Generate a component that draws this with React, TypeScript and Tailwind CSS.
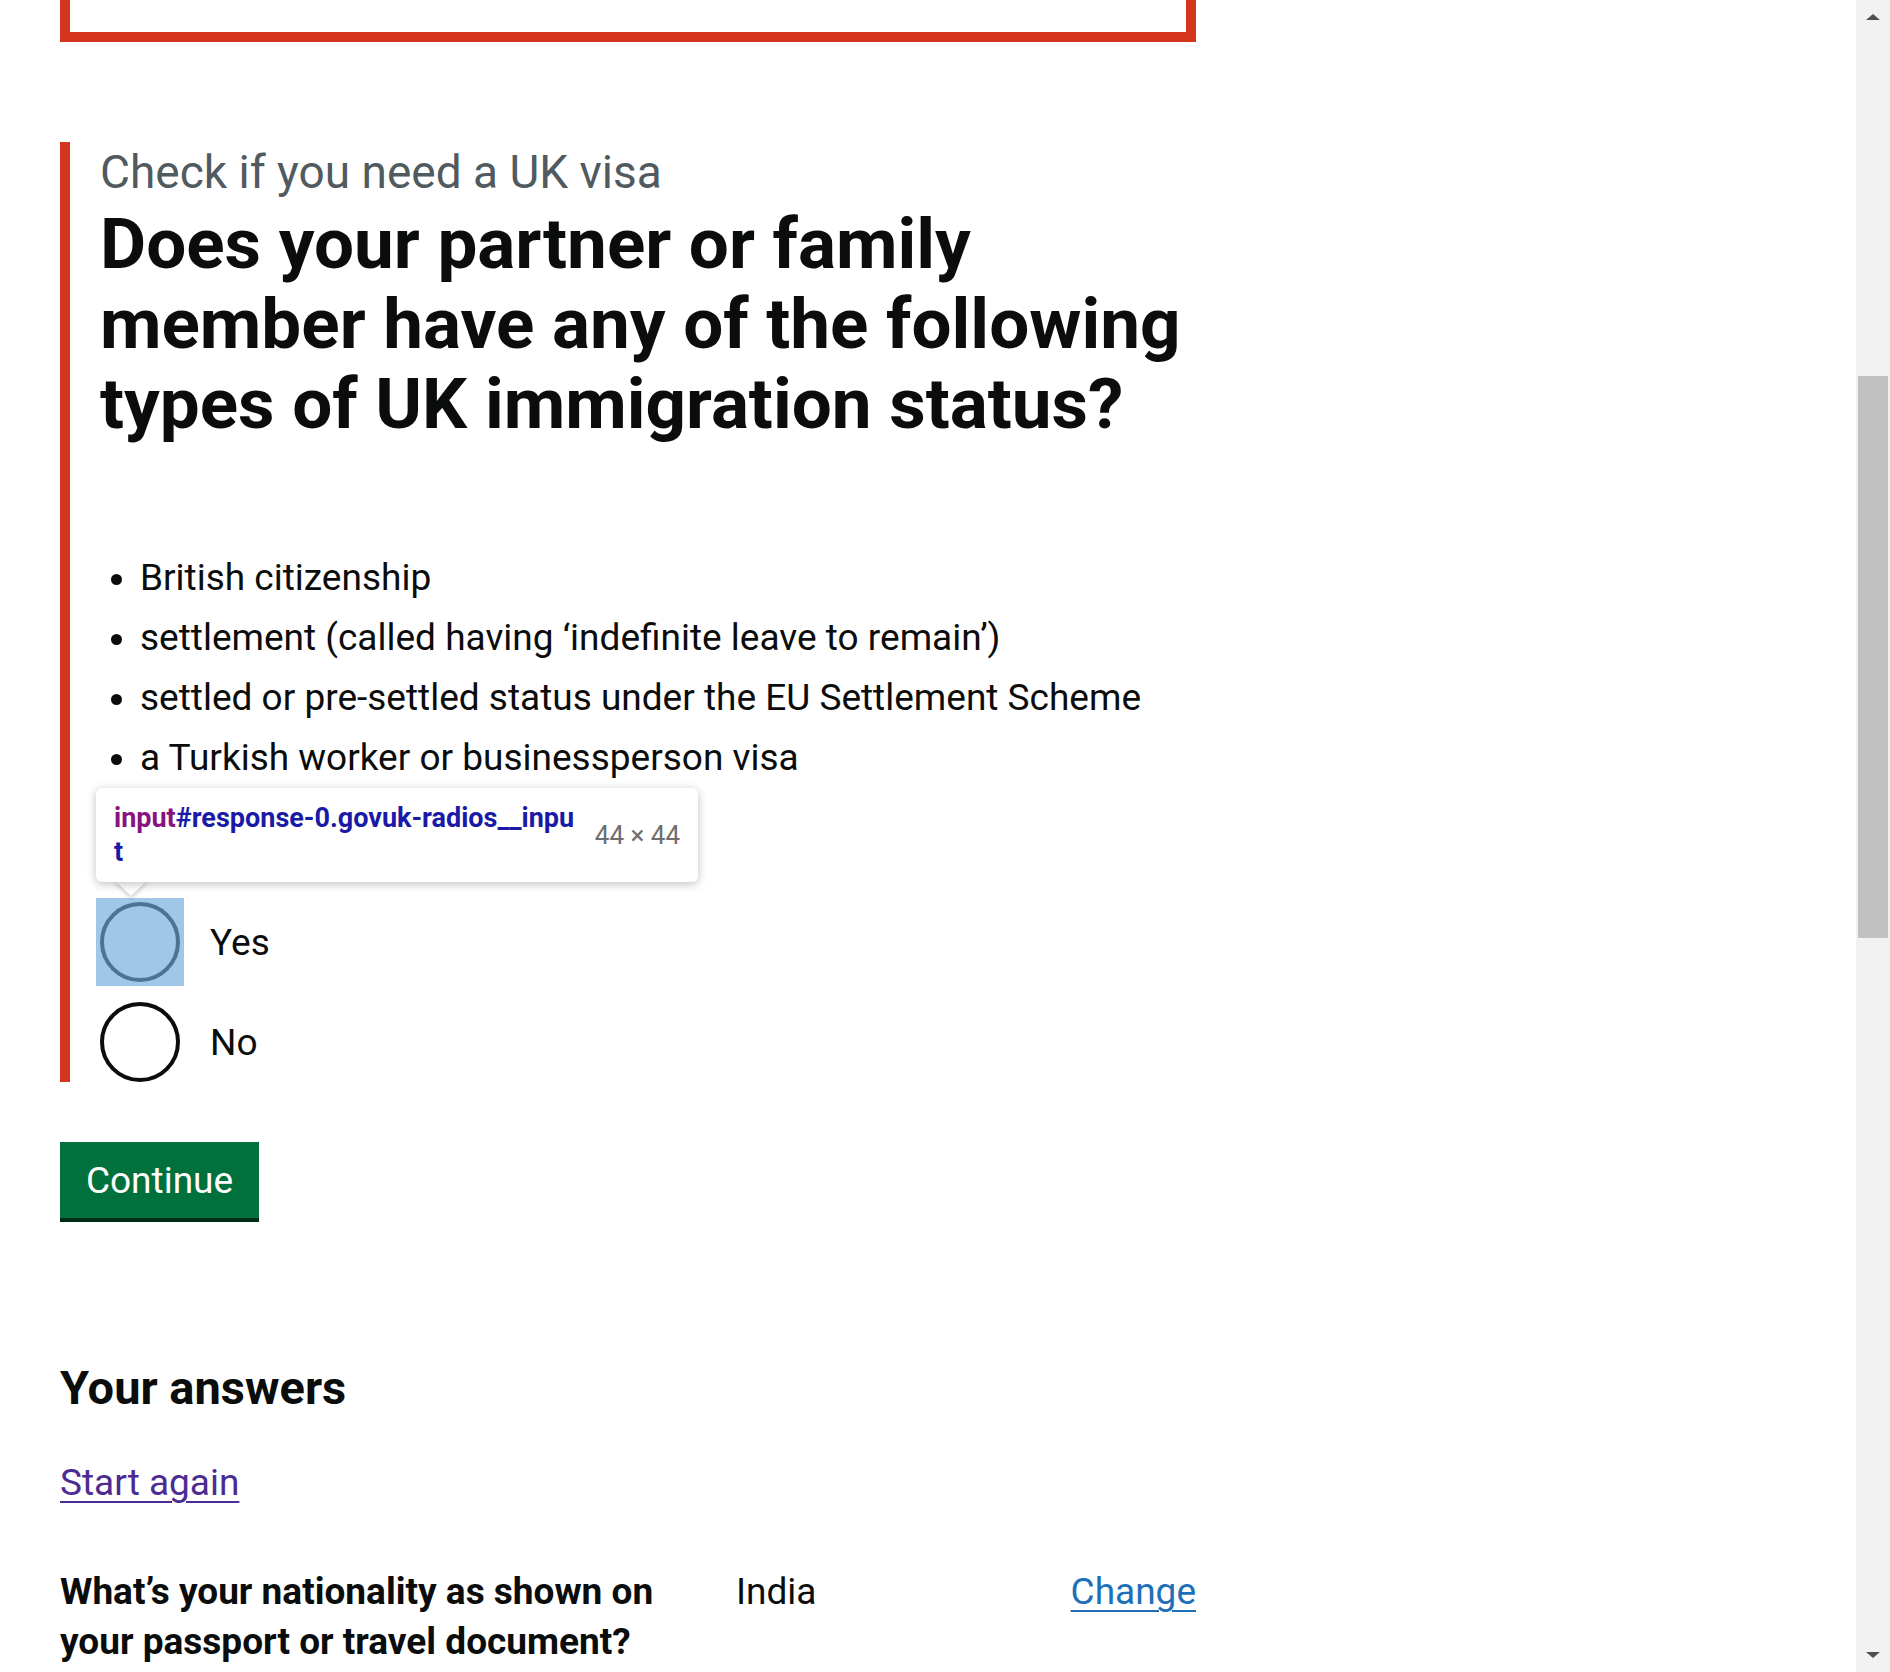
import React from "react";

const font = { fontFamily: 'Roboto, "Liberation Sans", Arial, sans-serif' };

function Radio({ label, highlighted, children }: { label: string; highlighted?: boolean; children?: React.ReactNode }) {
  return (
    <div className="relative flex h-[80px] items-start">
      <div className="h-[80px] w-[80px] shrink-0 rounded-full border-[4px] border-[#0b0c0c] bg-white" />
      <div className="pl-[30px] pt-[16px] text-[37px] leading-[50px] text-[#0b0c0c]">{label}</div>
      {highlighted && (
        <div className="absolute left-[-4px] top-[-4px] h-[88px] w-[88px] bg-[rgba(111,168,220,0.66)]" />
      )}
      {children}
    </div>
  );
}

function Tooltip() {
  return (
    <div className="absolute left-[-4px] top-[-114px] z-10 h-[94px] w-[602px]">
      <svg
        className="absolute left-[18px] top-[92px] drop-shadow-[0_2px_2px_rgba(0,0,0,0.22)]"
        width="34"
        height="18"
        viewBox="0 0 34 18"
      >
        <path d="M0 0 L34 0 L17 16 Z" fill="#ffffff" />
      </svg>
      <div className="relative flex h-full items-center justify-between rounded-[6px] bg-white pl-[18px] pr-[18px] shadow-[0_2px_10px_rgba(0,0,0,0.25)]">
        <div className="text-[27px] font-bold leading-[34px]" style={font}>
          <div className="whitespace-nowrap">
            <span className="text-[#881280]">input</span>
            <span className="text-[#1a1aa6]">#response-0.govuk-radios__inpu</span>
          </div>
          <div className="text-[#1a1aa6]">t</div>
        </div>
        <div className="whitespace-nowrap text-[26px] leading-[34px] text-[#6e6e6e]">44 × 44</div>
      </div>
      <div className="absolute left-[17px] top-[88px] h-[6px] w-[36px] bg-white" />
    </div>
  );
}

function Scrollbar() {
  return (
    <div className="flex h-full w-[34px] shrink-0 flex-col bg-[#f1f1f1]">
      <div className="flex h-[34px] items-center justify-center">
        <svg width="18" height="10" viewBox="0 0 18 10">
          <path d="M9 2 L16 8 L2 8 Z" fill="#505050" />
        </svg>
      </div>
      <div className="mt-[342px] mx-[2px] h-[562px] bg-[#c1c1c1]" />
      <div className="flex-1" />
      <div className="flex h-[34px] items-center justify-center">
        <svg width="18" height="10" viewBox="0 0 18 10">
          <path d="M9 8 L16 2 L2 2 Z" fill="#505050" />
        </svg>
      </div>
    </div>
  );
}

export default function App() {
  return (
    <div className="flex h-[1672px] w-full overflow-hidden bg-white text-[#0b0c0c]" style={font}>
      <main className="flex-1 pl-[60px]">
        <div className="w-[1136px]">
          {/* bottom of error summary */}
          <div className="h-[42px] border-x-[10px] border-b-[10px] border-[#d4351c]" />

          {/* form group with error */}
          <div className="mt-[100px] border-l-[10px] border-[#d4351c] pl-[30px]">
            <div className="text-[46px] leading-[60px] text-[#505a5f]">Check if you need a UK visa</div>
            <h1 className="mt-[2px] text-[71px] font-bold leading-[80px]">
              Does your partner or family
              <br />
              member have any of the following
              <br />
              types of UK immigration status?
            </h1>
            <ul className="mt-[109px] flex list-disc flex-col gap-[10px] pl-[40px] text-[37px] leading-[50px]">
              <li>British citizenship</li>
              <li>settlement (called having ‘indefinite leave to remain’)</li>
              <li>settled or pre-settled status under the EU Settlement Scheme</li>
              <li>a Turkish worker or businessperson visa</li>
            </ul>
            <div className="mt-[119px] flex flex-col gap-[20px]">
              <Radio label="Yes" highlighted>
                <Tooltip />
              </Radio>
              <Radio label="No" />
            </div>
          </div>

          <button className="mt-[60px] flex h-[76px] w-[199px] items-center justify-center bg-[#00703c] text-[37px] leading-[37px] text-white shadow-[0_4px_0_#002d18]">
            Continue
          </button>

          <h2 className="mt-[140px] text-[47px] font-bold leading-[60px]">Your answers</h2>

          <div className="mt-[40px] text-[37px] leading-[50px]">
            <a href="#" className="text-[#4c2c92] underline decoration-2 underline-offset-[6px]">
              Start again
            </a>
          </div>

          <div className="mt-[59px] flex text-[37px] leading-[50px]">
            <div className="w-[636px] shrink-0 font-bold">What’s your nationality as shown on your passport or travel document?</div>
            <div className="ml-[40px] flex-1">India</div>
            <div className="text-right">
              <a href="#" className="text-[#1d70b8] underline decoration-2 underline-offset-[6px]">
                Change
              </a>
            </div>
          </div>
        </div>
      </main>
      <Scrollbar />
    </div>
  );
}
